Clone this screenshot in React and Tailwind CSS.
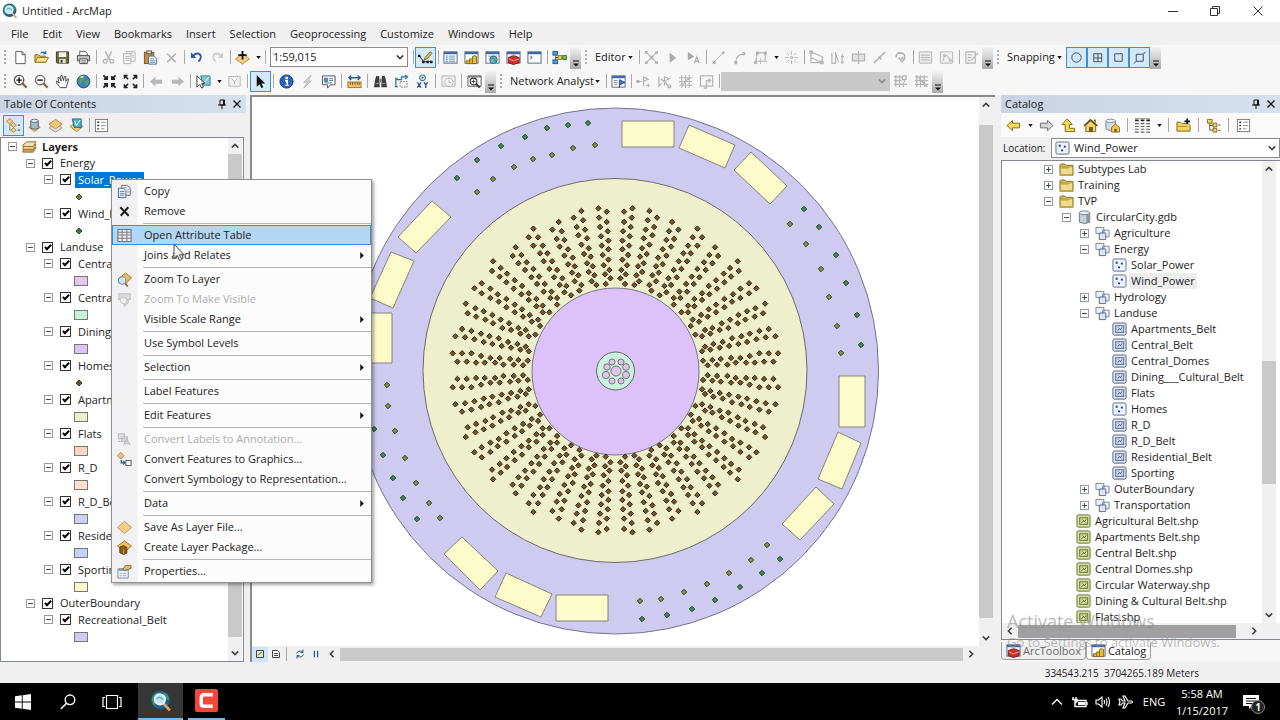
import { useState } from "react";
import clsx from "clsx";

const GREY = "#b4b4b4";

/* ---------- icons, all on a 16 x 16 grid ---------- */

const windowFrame = (
  <>
    <rect x="1" y="2" width="14" height="12" fill="#fff" stroke="#56657a" />
    <rect x="1" y="2" width="14" height="2.5" fill="#3f66a8" />
  </>
);

const polygonTile = (fill, stroke) => (
  <>
    <rect x="1" y="1" width="14" height="13" rx="1.5" fill={fill} stroke={stroke} />
    <rect x="4" y="4" width="8.5" height="7" fill="none" stroke={stroke} />
    <path d="M6 9.5 8 6.5 9 8.5 11 5.5M6 6H7M10 9.5H11" fill="none" stroke={stroke} />
  </>
);

const ICONS = {
  newDoc: <path d="M3 1.5H9.5L13 5V14.5H3ZM9.5 1.5V5H13" fill="#fff" stroke="#555" />,
  open: (
    <>
      <path d="M1 13V5H5L6.5 6.5H12V13Z" fill="#e0b94a" stroke="#8b7326" />
      <path d="M1 13 4 8H15.5L12.5 13Z" fill="#fbe08b" stroke="#8b7326" />
      <path d="M7 3.5Q10 1 12 3.5M12.5 1V4H9.5" fill="none" stroke="#2b6da8" strokeWidth="1.3" />
    </>
  ),
  save: (
    <>
      <path d="M1.5 2H14.5V14H2.5L1.5 13Z" fill="#6d6534" stroke="#3e3b22" />
      <rect x="4" y="2.5" width="8" height="5" fill="#f6f6f0" />
      <rect x="4.5" y="9.5" width="7" height="4.5" fill="#ddd" />
      <rect x="6" y="10.5" width="2" height="3" fill="#333" />
    </>
  ),
  print: (
    <>
      <path d="M4 6V1.5H10L12 3.5V6" fill="#fff" stroke="#555" />
      <path d="M1.5 6H14.5V11.5H1.5Z" fill="#c9c9c9" stroke="#444" />
      <path d="M4 9.5H12V14.5H4Z" fill="#fff" stroke="#444" />
      <path d="M5.5 11.5H10.5M5.5 13H10.5" stroke="#777" />
    </>
  ),
  cut: (
    <>
      <path d="M4.5 1.5 9.5 10.5M11.5 1.5 6.5 10.5" stroke={GREY} strokeWidth="1.5" />
      <circle cx="4.5" cy="12" r="2" fill="none" stroke={GREY} strokeWidth="1.4" />
      <circle cx="11.5" cy="12" r="2" fill="none" stroke={GREY} strokeWidth="1.4" />
    </>
  ),
  copyOff: (
    <>
      <path d="M1.5 4H9.5V14.5H1.5ZM5 4V1.5H14V12H9.5" fill="#f4f4f4" stroke={GREY} />
      <path d="M3.5 7H8M3.5 9H8M3.5 11H8M7.5 3.5H12M11 6H12.5M11 8H12.5" stroke={GREY} />
    </>
  ),
  copy: (
    <>
      <path d="M5 1.5H11L14 4V12H5Z" fill="#f4f4f4" stroke="#666" />
      <path d="M1.5 4.5H7L9.5 7V14.5H1.5Z" fill="#eef4fb" stroke="#556270" />
      <path d="M3 8H8M3 10H8M3 12H8M7 4H10M11 6.5H12.5M11 8.5H12.5" stroke="#4b86c2" />
    </>
  ),
  paste: (
    <>
      <rect x="1.5" y="2.5" width="10" height="12" fill="#c98a3a" stroke="#7c5320" />
      <rect x="4" y="1" width="5" height="3" fill="#ddd" stroke="#555" />
      <path d="M6 6.5H12L14.5 9V15H6Z" fill="#fff" stroke="#4d6892" />
      <path d="M7.5 9.5H12M7.5 11.5H13M7.5 13.2H13" stroke="#5b8ccc" />
    </>
  ),
  removeOff: <path d="M3.5 4 12.5 13M12.5 4 3.5 13" stroke={GREY} strokeWidth="1.8" />,
  remove: <path d="M3.5 3.5 12.5 12.5M12 3.5 4 12.5" stroke="#1d1d1d" strokeWidth="2.2" />,
  undo: (
    <>
      <path d="M4.5 6Q8 2.5 11.5 4.5Q14.5 7.5 10 12.5" fill="none" stroke="#2f5aa5" strokeWidth="2" />
      <path d="M2 2.5V8.5H8Z" fill="#2f5aa5" />
    </>
  ),
  redo: (
    <>
      <path d="M11.5 6Q8 2.5 4.5 4.5Q1.5 7.5 6 12.5" fill="none" stroke="#cfcfcf" strokeWidth="2" />
      <path d="M14 2.5V8.5H8Z" fill="#cfcfcf" />
    </>
  ),
  addData: (
    <>
      <path d="M8 4 15.5 9.5 8 15 .5 9.5Z" fill="#f3cc7c" stroke="#b58a45" />
      <path d="M8 1V10M3.5 5.5H12.5" stroke="#111" strokeWidth="2" />
    </>
  ),
  editTool: (
    <>
      <path d="M1.5 6 6 12.5H14" fill="none" stroke="#222" />
      <path d="M0 5H2.5V7.5H0ZM4.5 11.5H7V14H4.5ZM9 11.5H11.5V14H9ZM13 11.5H15.5V14H13Z" fill="#111" />
      <path d="M6.5 10.5 7.5 8 13 2 15 3.5 9.5 9.5Z" fill="#e9c04e" stroke="#77602a" />
    </>
  ),
  winList: (
    <>
      {windowFrame}
      <path d="M3 6.5H5M3 8.5H5M3 10.5H5M3 12.5H5" stroke="#2e73b8" />
      <path d="M6 6.5H13M6 8.5H13M6 10.5H13M6 12.5H13" stroke="#6a94b8" />
    </>
  ),
  winCatalog: (
    <>
      {windowFrame}
      <path d="M2.5 14.5V11.5H6V9.500H9V7L11 6 13.500 7V14.500Z" fill="#e6bf2d" stroke="#7b661a" />
      <path d="M6 11.500V14M9 9.500V14" stroke="#7b661a" />
    </>
  ),
  winSearch: (
    <>
      {windowFrame}
      <path d="M3 6.5H13" stroke="#999" />
      <circle cx="9" cy="10.5" r="4" fill="#69b3d3" stroke="#2a6179" />
      <path d="M7 9Q9 8 10 10T12 12" stroke="#3b9c55" strokeWidth="1.5" fill="none" />
    </>
  ),
  winToolbox: (
    <>
      {windowFrame}
      <path d="M2.5 8 8 6 14 8V13.5L8 15.5 2.5 13.5Z" fill="#c9332c" stroke="#7c1b17" />
      <path d="M3 9.5 8 11.5 14 9.5M6 6.5V5H10V6.5" fill="none" stroke="#f3a29d" />
    </>
  ),
  winPython: (
    <>
      {windowFrame}
      <path d="M3.5 6.5 5.5 8 3.5 9.5" fill="none" stroke="#333" />
    </>
  ),
  model: (
    <>
      <path d="M4 3V13M4 8H8M10 8H13" stroke="#333" />
      <rect x="1" y="1.5" width="5" height="4" fill="#4f9bd9" stroke="#275d8c" />
      <rect x="1" y="10.5" width="5" height="4" fill="#4f9bd9" stroke="#275d8c" />
      <rect x="6.5" y="6" width="4" height="4" fill="#f0d64e" stroke="#8c7a1c" />
      <rect x="11.5" y="6" width="4" height="4" fill="#7bc06a" stroke="#39732c" />
    </>
  ),
  topo: (
    <>
      <path d="M3 3 13 13M13 3 3 13" stroke={GREY} strokeWidth="1.2" />
      <path d="M1 1H4V4H1ZM12 1H15V4H12ZM1 12H4V15H1ZM12 12H15V15H12ZM6 6H10V10H6Z" fill={GREY} />
    </>
  ),
  editArrow: <path d="M5 3 12 8.5 5 13.5Z" fill="#a9a9a9" />,
  editArrowA: (
    <>
      <path d="M2 2 9 7 2 11Z" fill="#a9a9a9" />
      <path d="M9 14 11.5 7.5 14 14M10 12H13" fill="none" stroke="#a9a9a9" strokeWidth="1.3" />
    </>
  ),
  segLine: <path d="M3 13 13 3M2 12H4.5V14.5H2ZM12 2H14V4H12Z" fill={GREY} stroke={GREY} />,
  segArc: <path d="M4 14Q4 5 12 4M3 12.5H5V14.5H3ZM11.5 3H13.5V5H11.5Z" fill="none" stroke={GREY} strokeWidth="1.3" />,
  trace: (
    <>
      <path d="M3 13 4.5 3H13V12" fill="none" stroke={GREY} strokeWidth="1.2" />
      <path d="M1.5 12H4V14.5H1.5ZM3.5 2H6V4.5H3.5ZM12 2H14.5V4.5H12ZM8 9V15M5 12H15" fill={GREY} stroke={GREY} />
    </>
  ),
  burst: <path d="M8 1V5M8 11V15M1 8H5M11 8H15M3 3 5.5 5.5M13 3 10.5 5.5M3 13 5.5 10.5M13 13 10.5 10.5M7 7H9V9H7Z" stroke={GREY} fill="none" />,
  reshapeA: <path d="M2 2V13.5H14V7L2 2M2 8 14 13.5M1 1H3.5V3.5H1ZM12.5 12H15V14.5H12.5Z" fill="none" stroke={GREY} strokeWidth="1.2" />,
  reshapeB: <path d="M2 3V14H6V2M6 3 9 13M11.5 7H15M11.5 13H15M13 4V15" fill="none" stroke={GREY} strokeWidth="1.2" />,
  cutPoly: <path d="M1.5 4.5H14.5V11.5H1.5ZM8 1V15" fill="#e2e2e2" stroke={GREY} strokeWidth="1.3" />,
  split: <path d="M2 14 14 2M7 7 10 10" stroke={GREY} strokeWidth="1.6" />,
  rotate: <path d="M3.5 8Q3 3 8 3Q13 3.5 12.5 8Q12 12 8 12.5M6 8 8 10.5 11 8" fill="none" stroke={GREY} strokeWidth="1.8" />,
  attrOff: <path d="M1.5 2H14.5V14H1.5ZM3 5.5H13M3 8H13M3 10.5H13" fill="#ececec" stroke={GREY} />,
  sketchOff: <path d="M1.5 2H14.5V14H1.5ZM4 12 6 6H9L12 11M5 5H7V7H5ZM11 10H13V12H11Z" fill="#f1f1f1" stroke={GREY} />,
  createOff: <path d="M2 2H12V14H2ZM4 5H8M4 8H8M4 11H7M8 11 15 3" fill="#f1f1f1" stroke={GREY} strokeWidth="1.2" />,
  zoomIn: (
    <>
      <path d="M10 10 14.5 14.5" stroke="#8c6a3f" strokeWidth="2.4" />
      <circle cx="6.5" cy="6.5" r="5" fill="#fff" stroke="#4c4c4c" strokeWidth="1.3" />
      <path d="M6.5 3.5V9.5M3.5 6.5H9.5" stroke="#111" strokeWidth="1.5" />
    </>
  ),
  zoomOut: (
    <>
      <path d="M10 10 14.5 14.5" stroke="#8c6a3f" strokeWidth="2.4" />
      <circle cx="6.5" cy="6.5" r="5" fill="#fff" stroke="#666" strokeWidth="1.3" />
      <path d="M3.5 6.5H9.5" stroke="#111" strokeWidth="1.5" />
    </>
  ),
  pan: (
    <path
      d="M5.5 14.5 2 10 1.5 7.5 4.5 9.5 3 4 4.5 3.5 6.5 7.5 6 2 7.5 1.5 9 7 10 2.5 11.5 2.5 11.5 8 13.5 5 14.5 5.5 12 14.5Z"
      fill="#fff"
      stroke="#444"
    />
  ),
  globe: (
    <>
      <circle cx="8" cy="8" r="6.8" fill="#3e7fd0" stroke="#24487e" />
      <path d="M3 4Q6 1.5 8 3.5Q10 6 7 7.5Q5 8 5 11Q2 9 3 4Z" fill="#58a63f" />
      <path d="M10 7Q13 6 14 8Q13 12 10 13Q9 10 10 7Z" fill="#58a63f" />
      <path d="M5 3.5Q6.5 2.5 8 3" stroke="#fff" fill="none" strokeWidth="1.5" />
    </>
  ),
  shrink: (
    <path
      d="M1.5 1.500 5 5M14.500 1.500 11 5M1.500 14.500 5 11M14.500 14.500 11 11M2 5.500H5.500V2M14 5.500H10.500V2M2 10.500H5.500V14M14 10.500H10.500V14"
      fill="none"
      stroke="#222"
      strokeWidth="1.8"
    />
  ),
  grow: (
    <path
      d="M2 2 5.500 5.500M14 2 10.500 5.500M2 14 5.500 10.500M14 14 10.500 10.500M1.5 5V1.5H5M14.5 5V1.5H11M1.5 11V14.5H5M14.5 11V14.5H11"
      fill="none"
      stroke="#222"
      strokeWidth="1.6"
    />
  ),
  backOff: <path d="M1 8 7 3V6H14V10.5H7V13Z" fill="#b9b9b9" />,
  fwdOff: <path d="M15 8 9 3V6H2V10.5H9V13Z" fill="#b9b9b9" />,
  selectFeat: (
    <>
      <path d="M5 2H15V12H8Z" fill="#7fc9d6" stroke="#39808c" />
      <path d="M8 10 14 3" stroke="#fff" />
      <path d="M1 2V14L4 11 6 15 8 14 6 10H9.5Z" fill="#fff" stroke="#333" />
    </>
  ),
  clearSel: <path d="M2 2.5H14V13H2ZM5 5 8 8 11 5M8 8V11" fill="#f2f2f2" stroke={GREY} />,
  pointer: <path d="M4 1V13.5L7 10.8 9 15 11 14 9 10H13Z" fill="#111" />,
  info: (
    <>
      <circle cx="8" cy="8" r="7" fill="#2a62b4" stroke="#17407e" />
      <path d="M6.5 7H9V12M6.5 12H10.5M7.5 3.5H9V5H7.5Z" stroke="#fff" strokeWidth="1.3" fill="#fff" />
    </>
  ),
  bolt: <path d="M12 1 4 9H8L4 15 12 7.5H8.5Z" fill="#d2d2d2" stroke="#b9b9b9" />,
  popup: (
    <>
      <path d="M1.5 2H15V11.5H10L7 15V11.5H1.5Z" fill="#f7f9fb" stroke="#555" />
      <path d="M3.5 4.5H7V8H3.5ZM8.5 5H13M8.5 7H13M3.5 9.5H12" fill="#5d8db5" stroke="#5d7d99" />
    </>
  ),
  measure: (
    <>
      <path d="M2 4H14M4.5 1.5 2 4 4.5 6.5M11.5 1.5 14 4 11.5 6.5" fill="none" stroke="#2c5b99" strokeWidth="1.5" />
      <rect x="1" y="8.5" width="14" height="6" fill="#f1c36a" stroke="#a2742a" />
      <path d="M3.5 9V11.5M6 9V11.5M8.5 9V11.5M11 9V11.5M13 9V11.5" stroke="#6b4a16" />
    </>
  ),
  find: (
    <>
      <path d="M3.5 2H6.5L7.2 14H1L2.5 5ZM9.5 2H12.5L13.5 5 15 14H8.8Z" fill="#3e3e3e" />
      <path d="M7 5H9V9H7Z" fill="#777" />
      <path d="M3 10H6M10 10H13" stroke="#aaa" />
    </>
  ),
  route: (
    <>
      <path d="M2 13V6H8V3H14" fill="none" stroke="#2f6da8" strokeWidth="1.3" />
      <path d="M11.5 1 14.5 3 11.5 5.5M1 4.5H4M1 13.5H4" fill="none" stroke="#2f6da8" strokeWidth="1.2" />
      <path d="M6.5 8H14V14H6.5Z" fill="#f3f3f3" stroke="#888" strokeDasharray="2 1" />
    </>
  ),
  goToXY: (
    <>
      <circle cx="8" cy="4" r="3" fill="none" stroke="#3a76a8" strokeWidth="1.2" />
      <path d="M7 4H9M2.5 9 6.5 14.5M6.5 9 2.5 14.5M9.5 9 11.5 11.5 13.5 9M11.5 11.5V15" fill="none" stroke="#2c4f7e" strokeWidth="1.4" />
    </>
  ),
  clockOff: (
    <>
      <path d="M1 2H15V13H1Z" fill="#eee" stroke={GREY} />
      <circle cx="8.5" cy="9" r="4.5" fill="#f5f5f5" stroke={GREY} />
      <path d="M8.5 6V9H11" fill="none" stroke={GREY} />
    </>
  ),
  viewer: (
    <>
      <path d="M1 2H15V13H1Z" fill="#fff" stroke="#555" />
      <path d="M1 3H15" stroke="#777" strokeWidth="1.5" />
      <path d="M9.5 10 13.5 14.5" stroke="#333" strokeWidth="2" />
      <circle cx="7" cy="8" r="3.6" fill="#fff" stroke="#333" strokeWidth="1.2" />
      <path d="M5 8H9M7 6V10" stroke="#333" />
    </>
  ),
  winNetwork: (
    <>
      {windowFrame}
      <path d="M3 7H7M3 9H7M3 11H7" stroke="#888" />
      <path d="M9 15V6L15 9 9.5 11.5" fill="#3d72cf" stroke="#2b51a0" />
    </>
  ),
  netA: <path d="M1 8H6M8 13V3L13 5.5 8 8M11 12H15M13 10V14M1 7H3V9H1Z" fill="none" stroke={GREY} strokeWidth="1.3" />,
  netB: <path d="M2 3V13L5 10M8 12V3L13 5 8 7.5M4 5 13 13M12 12H14.5V14.5H12Z" fill="none" stroke={GREY} strokeWidth="1.3" />,
  netGrid: <path d="M1 4H15M1 8H15M1 12H15M4 1V15M8 1V15M12 1V15M4 12 8 8 12 4" fill="none" stroke={GREY} strokeWidth="1.2" />,
  netDir: <path d="M1.5 2H14.5V13H1.5ZM5 15H8V7H12M10 5 12.5 7 10 9" fill="none" stroke={GREY} strokeWidth="1.3" />,
  netGridB: <path d="M1 3H9M1 7H9M1 11H15M3 1V14M7 1V14M11 9V14M10 2H14V6H10ZM12 6V9" fill="none" stroke={GREY} strokeWidth="1.3" />,
  netGridC: <path d="M1 3H15M1 7H15M1 11H15M3 1V14M7 1V14M11 1V14M5 4 14 14" fill="none" stroke={GREY} strokeWidth="1.3" />,
  snapPoint: <circle cx="8" cy="8" r="5" fill="none" stroke="#34495e" />,
  snapEnd: <path d="M4 4H12.5V12.5H4ZM8.5 4V12.5M4 8.5H12.5" fill="none" stroke="#34495e" />,
  snapVertex: <path d="M4 4H12V12H4Z" fill="none" stroke="#34495e" />,
  snapEdge: <path d="M4.5 4.5H12V12H4.5ZM2 14.5 4.5 12M12 4.5 14.5 2" fill="none" stroke="#34495e" />,
  drawOrder: (
    <>
      <path d="M4 5V13H9M5 8H9" fill="none" stroke="#8a8a8a" />
      <path d="M4 .5 7.5 3.5 4 6.5 .5 3.5ZM8 5 11 7.5 8 10 5 7.5ZM8 10.5 11 13 8 15.5 5 13Z" fill="#f5cd82" stroke="#b8893c" />
      <path d="M12.5 7.5H15M12.5 13H15" stroke="#555" strokeWidth="1.3" />
    </>
  ),
  source: (
    <>
      <path d="M2 10 8 14.5 14 10 12 8H4Z" fill="#f1c46f" stroke="#b58a45" />
      <path d="M4 3V11Q8 13 12 11V3" fill="#a9b9cb" stroke="#5b6b7d" />
      <ellipse cx="8" cy="3" rx="4" ry="1.7" fill="#e5edf5" stroke="#5b6b7d" />
    </>
  ),
  visibility: (
    <>
      <path d="M8 6 15 10.5 8 15 1 10.5Z" fill="#dedede" stroke="#999" />
      <path d="M8 1.5 15 6.5 8 11.5 1 6.5Z" fill="#f3c876" stroke="#b58a45" />
    </>
  ),
  selectionList: (
    <>
      <path d="M1 9 8 14.5 15 9 12 7H4Z" fill="#f1c46f" stroke="#b58a45" />
      <path d="M3.5 1H13V10H5.5Z" fill="#49b3cc" stroke="#2c6475" />
      <path d="M6 3 8 8 12 2" fill="none" stroke="#fff" />
    </>
  ),
  options: (
    <>
      <rect x="1.5" y="1.5" width="13" height="13" fill="#fff" stroke="#777" />
      <path d="M3.5 4.5H5.5M3.5 8H5.5M3.5 11.5H5.5" stroke="#333" strokeWidth="1.4" />
      <path d="M7.5 4.5H13M7.5 8H13M7.5 11.5H11" stroke="#999" strokeWidth="1.2" />
    </>
  ),
  layers: (
    <>
      <path d="M1 12 5 9H15L12 14H1Z" fill="#d9a441" stroke="#8d6a2d" />
      <path d="M1 9 5 6H15L12 11H1Z" fill="#f0d79c" stroke="#8d6a2d" />
      <path d="M1 6.5 5 3H15L12 8H1Z" fill="#f5dfa9" stroke="#8d6a2d" />
    </>
  ),
  table: (
    <>
      <rect x="1" y="1.5" width="14" height="13" fill="#eee" stroke="#666" />
      <path d="M1 4.5H15M1 7.5H15M1 11H15M5.5 1.5V14.5M10.5 1.5V14.5" stroke="#777" />
    </>
  ),
  zoomLayer: (
    <>
      <path d="M9 1 15.500 6 9 13 2 7Z" fill="#efb860" stroke="#b07a2c" />
      <path d="M8.500 12 11.500 15.500" stroke="#8c6a3f" strokeWidth="2" />
      <circle cx="5.5" cy="9" r="4" fill="#cfe6f7" stroke="#6d8fab" strokeWidth="1.2" />
    </>
  ),
  zoomVisible: (
    <>
      <path d="M2 2H14V8H2ZM5 8 8 15 12 11V8" fill="#dcdcdc" stroke="#c2c2c2" strokeWidth="1.3" />
      <circle cx="7" cy="9" r="3.5" fill="#eee" stroke="#c2c2c2" />
    </>
  ),
  annoOff: <path d="M1.5 2H8V7H1.5ZM5 5H11V10H5ZM7 14 10 7 14 14M8 12H13M1 10H4" fill="#e2e2e2" stroke="#c0c0c0" strokeWidth="1.2" />,
  toGraphics: (
    <>
      <path d="M4 .5 7.5 4 4 7.5 .5 4Z" fill="#f2c47c" stroke="#b98440" />
      <path d="M4.5 8.5V11.5H8M6.5 9.5 8.5 11.5 6.5 13.5" fill="none" stroke="#1f6396" strokeWidth="1.3" />
      <rect x="9.5" y="9" width="5.5" height="5.5" fill="#fff" stroke="#555" />
    </>
  ),
  layerFile: <path d="M8 1.500 15.5 8 8 14.500 .5 8Z" fill="#f3cf86" stroke="#c39345" />,
  layerPackage: (
    <>
      <path d="M8 1 15.5 6.5 8 13 .5 6.5Z" fill="#f0c05c" stroke="#a87620" />
      <path d="M3 7.5 7 6 10.5 8V14L7 15.5 3 13.5Z" fill="#8a5a1e" stroke="#5f3c10" />
      <path d="M7 9.5V15" stroke="#caa05c" />
    </>
  ),
  properties: (
    <>
      <path d="M1 5H12V15H1Z" fill="#eef6fb" stroke="#7c8a94" />
      <path d="M1.5 6.5H11.5" stroke="#6ea3c7" strokeWidth="2" />
      <path d="M3 10H5M6 10H10M3 12.5H5M6 12.5H10" stroke="#9aabb5" />
      <path d="M6 6 9 1.5H15V4.5L11 6 8 7Z" fill="#d9b878" stroke="#8b6b33" />
    </>
  ),
  catBack: <path d="M1 8 7 2.5V5.5H14.5V10.5H7V13.5Z" fill="#f4d95a" stroke="#7d6a18" />,
  catFwd: <path d="M15 8 9 2.5V5.5H1.5V10.5H9V13.5Z" fill="#d8d8d8" stroke="#6a6a6a" />,
  catUp: <path d="M6.5 1 12 7H9V11H14.5V14.5H4.5V7H1Z" fill="#f4d95a" stroke="#7d6a18" />,
  home: (
    <>
      <path d="M3 8V14.5H13.5V8L8 3Z" fill="#f2d470" stroke="#7d6a18" />
      <path d="M1 8.5 8 2 15.5 8.5" fill="none" stroke="#5d4d12" strokeWidth="1.6" />
      <path d="M7 10H10V14.5H7ZM11.5 2H13V5" fill="#6b5a1c" stroke="#6b5a1c" />
    </>
  ),
  defaultGdb: (
    <>
      <path d="M1 3V12Q6 15 11 12V3" fill="#d3dbe4" stroke="#7d8894" />
      <ellipse cx="6" cy="3" rx="5" ry="1.8" fill="#f3f6f9" stroke="#7d8894" />
      <path d="M7 10 11 6.5 15.5 10V15H7Z" fill="#f2c94f" stroke="#8a6d19" />
      <path d="M10 11.5H12.5V15H10Z" fill="#6b5a1c" />
    </>
  ),
  contents: (
    <>
      <path d="M0 2.500H4M6 2.500H10M12 2.500H16" stroke="#222" strokeWidth="1.800" />
      <path d="M0 .500H16" stroke="#999" />
      <path d="M0 6H4M6 6H10M12 6H16M0 9H4M6 9H10M12 9H16M0 12H4M6 12H10M12 12H16M0 15H4M6 15H10M12 15H16" stroke="#666" strokeWidth="1.200" />
    </>
  ),
  connect: (
    <>
      <path d="M1 14V4.5H5L6.5 6H13L15 8V14Z" fill="#f1d567" stroke="#7d6a18" />
      <path d="M1.5 9H12" stroke="#a98f2c" />
      <path d="M12 .5V6.5M9 3.5H15" stroke="#111" strokeWidth="1.8" />
    </>
  ),
  tree: (
    <>
      <path d="M4 5V13H8M4 8H8" fill="none" stroke="#555" />
      <path d="M1.5 1.5H6.5V5.5H1.5ZM7.5 5.5H11.5V9.5H7.5ZM7.5 11H11.5V15H7.5Z" fill="#f1d567" stroke="#7d6a18" />
      <path d="M13 7.5H15.5M13 13H15.5" stroke="#555" strokeWidth="1.2" />
    </>
  ),
  folder: (
    <>
      <path d="M1 14V3L2 2H6L7.5 3.5H15V14Z" fill="#cfae4c" stroke="#8b7630" />
      <path d="M1.5 13.500V6.5H10L11.5 5H14.5V13.5Z" fill="#f0db8a" stroke="#a48d3d" strokeWidth=".7" />
    </>
  ),
  gdb: (
    <>
      <path d="M2.5 3V13Q8 16 13.5 13V3" fill="#c8ced6" stroke="#6d7783" />
      <path d="M10 4V14L13.5 13V3Z" fill="#8c97a5" />
      <ellipse cx="8" cy="3" rx="5.5" ry="2" fill="#eef1f5" stroke="#6d7783" />
    </>
  ),
  dataset: (
    <>
      <path d="M1 1.5H9.5V8H1ZM8 4.5H15V11.5H8Z" fill="#edf1f8" stroke="#7482a0" />
      <path d="M4.5 7.5H11.5V14.5H4.5Z" fill="#dde3f0" stroke="#5c6a8a" />
    </>
  ),
  points: (
    <>
      <rect x="1" y="1" width="14" height="13" rx="1.5" fill="#eaf0fb" stroke="#5d6b8e" />
      <path d="M4 4H6V6H4ZM9.5 5H11.5V7H9.5ZM6.5 9H8.5V11H6.5Z" fill="#27365c" />
    </>
  ),
  polygons: polygonTile("#dbe4f2", "#51607f"),
  shapefile: polygonTile("#dbe4a4", "#5d6a2d"),
};

function Icon({ name, className = "size-4" }) {
  return (
    <svg viewBox="0 0 16 16" className={clsx("shrink-0", className)} aria-hidden="true">
      {ICONS[name]}
    </svg>
  );
}

function Chevron({ dir = "down", className = "size-2" }) {
  const d = {
    down: "M1 3 5 7 9 3",
    up: "M1 7 5 3 9 7",
    left: "M7 1 3 5 7 9",
    right: "M3 1 7 5 3 9",
  }[dir];
  return (
    <svg viewBox="0 0 10 10" className={clsx("shrink-0", className)} aria-hidden="true">
      <path d={d} fill="none" stroke="#404040" strokeWidth="2" />
    </svg>
  );
}

/* magnifier over a globe, used by the title bar and the taskbar */
function ArcLogo({ className }) {
  return (
    <svg viewBox="0 0 20 20" className={className} aria-hidden="true">
      <circle cx="9.5" cy="9" r="8.5" fill="#1d5f86" />
      <path d="M2 7Q5 1 10 3Q8 6 5 8Q4 12 5 15Q1 11 2 7ZM12 2Q17 4 17.5 9Q14 9 13 6Z" fill="#3c9a68" />
      <path d="M12 12 18 18.5" stroke="#d9a96a" strokeWidth="2.4" />
      <circle cx="9" cy="8.5" r="4.8" fill="#bfe3ef" stroke="#eaf6fa" strokeWidth="1.5" />
      <path d="M6 8Q9 5 12 9" stroke="#6fb6cf" strokeWidth="1.5" fill="none" />
    </svg>
  );
}

/* ---------- toolbars ---------- */

const Grip = () => (
  <span className="flex w-2.5 shrink-0 justify-center">
    <span className="h-3.5 border-l-2 border-dotted border-[#b0b0b0]" />
  </span>
);

const Sep = ({ className = "w-1" }) => (
  <span className={clsx("flex shrink-0 justify-center", className)}>
    <span className="h-3.5 w-px bg-[#a8a8a8]" />
  </span>
);

const Drop = () => (
  <button aria-label="More choices" className="flex h-5 w-2.5 shrink-0 items-center justify-center">
    <svg viewBox="0 0 6 4" className="h-[3px] w-[5px]">
      <path d="M0 0H6L3 4Z" fill="#111" />
    </svg>
  </button>
);

const Overflow = () => (
  <button
    aria-label="Toolbar options"
    className="flex h-[22px] w-[11px] shrink-0 items-end justify-center self-end bg-linear-to-b from-[#f4f4f4] to-[#a9a9a9] pb-0.5"
  >
    <svg viewBox="0 0 6 7" className="h-[7px] w-1.5">
      <path d="M0 1H6" stroke="#111" />
      <path d="M0 3.5H6L3 6.5Z" fill="#111" />
    </svg>
  </button>
);

function Tool({ name, on }) {
  return (
    <button
      aria-label={name}
      aria-pressed={on}
      className={clsx(
        "flex h-[21px] w-[21px] shrink-0 items-center justify-center",
        on && "border border-[#3d8fd1] bg-[#d5e8f8]",
      )}
    >
      <Icon name={name} className="size-[15px]" />
    </button>
  );
}

/* "|" separator, "v" drop-down arrow, "*" before a name marks a pressed tool */
function Tools({ list, sep }) {
  return list.split(" ").map((t, i) => {
    if (t === "|") return <Sep key={i} className={sep} />;
    if (t === "v") return <Drop key={i} />;
    return <Tool key={i} name={t.replace("*", "")} on={t.startsWith("*")} />;
  });
}

function MenuText({ children, className }) {
  return (
    <button className={clsx("flex shrink-0 items-center justify-between pl-1 whitespace-nowrap", className)}>
      {children}
      <svg viewBox="0 0 6 4" className="mr-1 h-[3px] w-[5px]">
        <path d="M0 0H6L3 4Z" fill="#111" />
      </svg>
    </button>
  );
}

function StandardToolbar() {
  return (
    <div className="flex h-6 items-center">
      <Grip />
      <Tools list="newDoc open save print | cut copyOff paste removeOff | undo redo | addData v |" />
      <label className="relative mx-[3px] flex w-[138px] shrink-0 items-center">
        <select aria-label="Map scale" className="h-5 w-full appearance-none border border-[#8a8a8a] bg-white pl-0.5 text-[11px]">
          <option>1:59,015</option>
        </select>
        <Chevron className="pointer-events-none absolute right-1 size-2" />
      </label>
      <Tools list="| *editTool | winList winCatalog winSearch winToolbox winPython | model" />
      <Overflow />
      <Grip />
      <MenuText className="w-[46px]">Editor</MenuText>
      <Tools list="| topo editArrow editArrowA | segLine segArc trace v burst | reshapeA reshapeB cutPoly split rotate | attrOff sketchOff | createOff" />
      <Overflow />
      <Grip />
      <MenuText className="w-[63px]">Snapping</MenuText>
      <Tools list="*snapPoint *snapEnd *snapVertex *snapEdge" />
      <Overflow />
    </div>
  );
}

function ToolsToolbar() {
  return (
    <div className="flex h-6 items-center">
      <Grip />
      <Tools
        sep="w-[5px]"
        list="zoomIn zoomOut pan globe | shrink grow | backOff fwdOff | selectFeat v clearSel | *pointer | info bolt popup | measure | find route goToXY | clockOff | viewer"
      />
      <Overflow />
      <Grip />
      <MenuText className="w-[98px]">Network Analyst</MenuText>
      <Tools list="| winNetwork | netA netB netGrid netDir |" />
      <label className="relative flex w-[169px] shrink-0 items-center">
        <select aria-label="Network dataset" disabled className="h-[19px] w-full appearance-none bg-[#c8c8c8]" />
        <Chevron className="pointer-events-none absolute right-1 size-2 opacity-40" />
      </label>
      <Tools list="netGridB netGridC" />
      <Overflow />
    </div>
  );
}

/* ---------- shared panel parts ---------- */

function PanelHeader({ title }) {
  return (
    <div className="flex h-[18px] shrink-0 items-center bg-linear-to-r from-[#c9d3e3] to-[#d5e1ee] pr-0.5 pl-1">
      <h2 className="flex-1 truncate">{title}</h2>
      <button aria-label={`Pin ${title}`} className="flex w-4 justify-center">
        <svg viewBox="0 0 10 10" className="size-2.5">
          <path d="M3 1H7.5V6H3ZM1 6H9M5 6V10M6.5 1V6" fill="none" stroke="#111" />
        </svg>
      </button>
      <button aria-label={`Close ${title}`} className="flex w-3.5 justify-center">
        <svg viewBox="0 0 10 10" className="size-2.5">
          <path d="M1.5 1.5 8.5 8.5M8.5 1.5 1.5 8.5" stroke="#111" strokeWidth="1.3" />
        </svg>
      </button>
    </div>
  );
}

function Toggle({ open }) {
  return (
    <button aria-label={open ? "Collapse" : "Expand"} aria-expanded={open} className="size-[9px] shrink-0">
      <svg viewBox="0 0 9 9" className="size-[9px]">
        <rect x=".5" y=".5" width="8" height="8" fill="#fff" stroke="#999" />
        <path d={open ? "M2 4.5H7" : "M2 4.5H7M4.5 2V7"} stroke="#3b4a6b" />
      </svg>
    </button>
  );
}

function VScroll({ thumb, className }) {
  return (
    <div className={clsx("flex w-3.5 shrink-0 flex-col items-center bg-[#f0f0f0]", className)}>
      <button aria-label="Scroll up" className="flex h-4 items-center">
        <Chevron dir="up" />
      </button>
      <div className="flex w-full flex-1 flex-col">{thumb}</div>
      <button aria-label="Scroll down" className="flex h-4 items-center">
        <Chevron />
      </button>
    </div>
  );
}

/* ---------- table of contents ---------- */

const TOC = [
  { name: "Energy", layers: [["Solar_Power", "dot", "#6f7f34"], ["Wind_Power", "dot", "#2f7f35"]] },
  {
    name: "Landuse",
    layers: [
      ["Central_Belt", "box", "#e3c6ee"],
      ["Central_Domes", "box", "#c5f2dc"],
      ["Dining___Cultural_Belt", "box", "#dcc3f8"],
      ["Homes", "dot", "#6b4f22"],
      ["Apartments_Belt", "box", "#ecefcb"],
      ["Flats", "box", "#fdd5c2"],
      ["R_D", "box", "#fddfcd"],
      ["R_D_Belt", "box", "#cdcff3"],
      ["Residential_Belt", "box", "#c4d3f3"],
      ["Sporting", "box", "#fcfcca"],
    ],
  },
  { name: "OuterBoundary", layers: [["Recreational_Belt", "box", "#cfcaee"]] },
];

const checkClass =
  "relative size-[11px] shrink-0 appearance-none border border-[#333] bg-white checked:after:absolute checked:after:top-0 checked:after:left-[3px] checked:after:h-[7px] checked:after:w-1 checked:after:rotate-45 checked:after:border-r-2 checked:after:border-b-2 checked:after:border-black checked:after:content-['']";

function Check({ label, selected }) {
  return (
    <label className="flex items-center gap-1 whitespace-nowrap">
      <input type="checkbox" defaultChecked className={checkClass} />
      <span className={clsx("px-[3px] leading-4", selected && "bg-[#0078d7] text-white")}>{label}</span>
    </label>
  );
}

function TocLayer({ layer: [name, kind, fill] }) {
  return (
    <li>
      <div className="flex h-[17px] items-center gap-[7px] pl-[43px]">
        <Toggle open />
        <Check label={name} selected={name === "Solar_Power"} />
      </div>
      <div className="flex h-[17px] items-center pl-[73px]">
        <svg viewBox="0 0 14 10" className="h-2.5 w-3.5">
          {kind === "box" ? (
            <rect x=".5" y=".5" width="13" height="9" fill={fill} stroke="#777" />
          ) : (
            <path d="M5 2 8 5 5 8 2 5Z" fill={fill} stroke="#222" strokeWidth=".8" />
          )}
        </svg>
      </div>
    </li>
  );
}

function TableOfContents() {
  return (
    <aside className="flex w-[246px] shrink-0 flex-col">
      <PanelHeader title="Table Of Contents" />
      <div className="flex h-6 shrink-0 items-center pl-[3px]">
        <Tools list="*drawOrder source visibility selectionList | options" />
      </div>
      <div className="mr-0.5 flex min-h-0 flex-1 border border-[#828790] bg-white">
        <ul className="min-w-0 flex-1 overflow-hidden">
          <li>
            <div className="flex h-[17px] items-center gap-[5px] pl-[7px] font-bold">
              <Toggle open />
              <Icon name="layers" className="size-[15px]" />
              Layers
            </div>
            <ul>
              {TOC.map((g) => (
                <li key={g.name}>
                  <div className="flex h-4 items-center gap-[7px] pl-[25px]">
                    <Toggle open />
                    <Check label={g.name} />
                  </div>
                  <ul>
                    {g.layers.map((l) => (
                      <TocLayer key={l[0]} layer={l} />
                    ))}
                  </ul>
                </li>
              ))}
            </ul>
          </li>
        </ul>
        <VScroll className="mr-px" thumb={<span className="mb-2 flex-1 self-stretch bg-[#c9c9c9]" />} />
      </div>
    </aside>
  );
}

/* ---------- map ---------- */

/* homes in one quarter of the ring, [dx, dy] outward from the centre in thirds of a unit */
const HOMES = [
  [51, 486], [26, 476], [49, 458], [26, 445], [46, 430], [23, 417], [43, 402], [21, 389], [41, 374], [21, 363], [38, 346], [21, 332], [35, 315], [18, 301], [31, 288], [15, 276], [29, 259],
  [102, 478], [125, 458], [97, 450], [116, 430], [91, 422], [111, 405], [85, 396], [102, 377], [80, 366], [94, 349], [74, 341], [85, 321], [68, 312], [80, 295], [63, 285], [71, 267], [57, 256],
  [170, 445], [189, 422], [161, 417], [176, 394], [153, 391], [167, 371], [142, 363], [153, 344], [128, 338], [142, 318], [122, 312], [130, 293], [111, 285], [122, 267], [102, 256], [108, 239],
  [246, 425], [260, 399], [232, 399], [246, 374], [218, 374], [226, 351], [204, 351], [215, 327], [190, 327], [198, 304], [175, 301], [184, 279], [159, 276], [167, 256], [147, 253], [153, 234], [133, 225],
  [299, 369], [308, 343], [282, 346], [291, 321], [266, 324], [271, 301], [246, 304], [252, 279], [229, 281], [235, 259], [212, 259], [215, 236], [192, 236], [195, 217], [175, 217], [175, 197],
  [367, 327], [370, 298], [344, 307], [347, 281], [325, 290], [327, 264], [302, 270], [305, 245], [280, 253], [282, 228], [260, 231], [260, 211], [237, 214], [237, 192], [218, 194], [218, 174], [198, 174],
  [401, 261], [423, 246], [401, 231], [375, 245], [353, 228], [375, 217], [350, 206], [327, 214], [302, 197], [327, 189], [302, 174], [280, 183], [257, 166], [277, 161], [232, 152], [251, 146], [226, 133],
  [449, 200], [443, 171], [420, 186], [418, 161], [395, 177], [390, 152], [369, 166], [367, 141], [344, 152], [339, 127], [319, 141], [313, 121], [291, 127], [285, 110], [269, 121], [260, 102], [240, 107],
  [460, 124], [480, 102], [432, 118], [451, 99], [403, 110], [423, 93], [378, 102], [395, 85], [350, 96], [369, 79], [322, 85], [341, 73], [294, 79], [313, 68], [269, 71], [285, 62], [260, 57],
  [488, 51], [474, 26], [460, 51], [446, 26], [432, 51], [418, 23], [403, 43], [392, 23], [375, 37], [361, 23], [347, 37], [336, 17], [316, 34], [305, 17], [291, 31], [277, 15], [263, 29],
];

const WIND = [
  [588, 123], [568, 125], [547, 128], [525, 137], [501, 146], [477, 160], [457, 178],
  [804, 209], [819, 227], [836, 255], [846, 283], [857, 315], [861, 345],
  [780, 559], [762, 573], [740, 587], [715, 600], [692, 609], [667, 615], [642, 619],
  [374, 429], [383, 455], [393, 478], [403, 498], [417, 519],
];

const SOLAR = [
  [595, 145], [573, 148], [552, 155], [533, 159], [514, 167], [493, 179], [477, 192],
  [790, 224], [806, 244], [821, 269], [829, 297], [837, 326], [841, 353],
  [767, 545], [751, 560], [729, 573], [707, 584], [684, 592], [661, 599], [640, 601],
  [387, 385], [388, 406], [395, 431], [405, 458], [416, 483], [429, 503], [440, 518],
];

const APARTMENTS = [
  "622,121 674,121 674,147 622,147",
  "689,125 735,145 725,168 679,148",
  "751,152 787,186 770,204 734,170",
  "839,376 865,376 865,427 839,427",
  "838,432 861,443 842,489 818,479",
  "816,487 834,504 800,540 782,524",
  "462,537 498,571 480,590 444,554",
  "506,573 552,594 541,617 495,597",
  "556,595 608,595 608,621 556,621",
  "432,201 451,217 416,253 398,237",
  "391,252 414,261 393,308 370,298",
  "363,313 392,313 392,363 363,363",
];

const DOMES = [[612, 362, 3], [621, 362, 3], [626, 367, 3.4], [626, 375, 3.6], [621, 381, 3], [612, 381, 3], [606, 375, 3.6], [607, 367, 3.2]];

const marker = ([x, y], r) => `M${x} ${y - r}L${x + r} ${y}L${x} ${y + r}L${x - r} ${y}Z`;

const homesPath = HOMES.flatMap(([dx, dy]) =>
  [[1, 1], [1, -1], [-1, 1], [-1, -1]].map(([sx, sy]) => marker([615.4 + (sx * dx) / 3, 370.3 + (sy * dy) / 3], 2.7)),
).join("");

function CityMap() {
  return (
    <svg viewBox="252 97 727 549" className="size-full" role="img" aria-label="Circular city map">
      <g stroke="#74748a">
        <circle cx="615.5" cy="371" r="263" fill="#cfcbf0" />
        <circle cx="615" cy="370.5" r="192" fill="#eeefcd" stroke="#6a6a6a" />
        <circle cx="615.5" cy="371.5" r="83.5" fill="#dcc2f9" />
        <circle cx="615.5" cy="371" r="19" fill="#c9f3dc" stroke="#666" />
      </g>
      <g fill="#fcfbca" stroke="#84847c">
        {APARTMENTS.map((p) => (
          <polygon key={p} points={p} />
        ))}
      </g>
      <g fill="#e2c2ef" stroke="#777">
        <circle cx="616" cy="371" r="5" />
        {DOMES.map(([x, y, r]) => (
          <circle key={`${x}-${y}`} cx={x} cy={y} r={r} />
        ))}
      </g>
      <path d={homesPath} fill="#73552b" stroke="#33240f" />
      <path d={SOLAR.map((p) => marker(p, 2.7)).join("")} fill="#8a9440" stroke="#2d3018" />
      <path d={WIND.map((p) => marker(p, 2.7)).join("")} fill="#3c9148" stroke="#173a1f" />
    </svg>
  );
}

function MapView() {
  return (
    <main className="ml-1 flex min-w-0 flex-1 flex-col border-t-2 border-l-2 border-[#8a8a8a] bg-[#f0f0f0]">
      <div className="flex min-h-0 flex-1">
        <div className="min-w-0 flex-1 bg-white">
          <CityMap />
        </div>
        <VScroll className="mr-0.5" thumb={<span className="mt-3 mb-3 flex-1 bg-[#c9c9c9]" />} />
      </div>
      <div className="flex h-4 shrink-0 items-center">
        <button aria-label="Data view" className="flex h-[15px] w-4 items-center justify-center bg-[#cfe4f7]">
          <svg viewBox="0 0 10 10" className="size-2.5">
            <path d="M1.5 1.5H8.5V8.5H1.5ZM3 6.500 6.500 3" fill="#e4edca" stroke="#444" />
          </svg>
        </button>
        <button aria-label="Layout view" className="flex w-4 justify-center">
          <svg viewBox="0 0 10 10" className="size-2.5">
            <path d="M1.5 1.5H6.5L8.5 3.5V8.5H1.5ZM3 4.500H7M3 6.500H7" fill="#fff" stroke="#444" />
          </svg>
        </button>
        <Sep />
        <button aria-label="Refresh" className="ml-1 flex w-4 justify-center">
          <svg viewBox="0 0 10 10" className="size-2.5">
            <path d="M1.5 4.5Q3 1 7.5 2.5M8.5 5.5Q7 9 2.5 7.5M8 .5V3.5H5.5M2 9.5V6.5H4.5" fill="none" stroke="#2c5b86" />
          </svg>
        </button>
        <button aria-label="Pause drawing" className="flex w-4 justify-center">
          <svg viewBox="0 0 10 10" className="size-2">
            <path d="M3 1V9M7 1V9" stroke="#2c50a0" strokeWidth="1.6" />
          </svg>
        </button>
        <button aria-label="Scroll left" className="flex w-4 justify-center">
          <Chevron dir="left" />
        </button>
        <span className="h-[13px] flex-1 bg-[#c9c9c9]" />
        <button aria-label="Scroll right" className="mr-4 flex w-4 justify-center">
          <Chevron dir="right" />
        </button>
      </div>
    </main>
  );
}

/* ---------- catalog ---------- */

/* [level, toggle, icon, name] */
const CATALOG = [
  [0, "+", "folder", "Subtypes Lab"],
  [0, "+", "folder", "Training"],
  [0, "-", "folder", "TVP"],
  [1, "-", "gdb", "CircularCity.gdb"],
  [2, "+", "dataset", "Agriculture"],
  [2, "-", "dataset", "Energy"],
  [3, "", "points", "Solar_Power"],
  [3, "", "points", "Wind_Power"],
  [2, "+", "dataset", "Hydrology"],
  [2, "-", "dataset", "Landuse"],
  [3, "", "polygons", "Apartments_Belt"],
  [3, "", "polygons", "Central_Belt"],
  [3, "", "polygons", "Central_Domes"],
  [3, "", "polygons", "Dining___Cultural_Belt"],
  [3, "", "polygons", "Flats"],
  [3, "", "points", "Homes"],
  [3, "", "polygons", "R_D"],
  [3, "", "polygons", "R_D_Belt"],
  [3, "", "polygons", "Residential_Belt"],
  [3, "", "polygons", "Sporting"],
  [2, "+", "dataset", "OuterBoundary"],
  [2, "+", "dataset", "Transportation"],
  [1, "", "shapefile", "Agricultural Belt.shp"],
  [1, "", "shapefile", "Apartments Belt.shp"],
  [1, "", "shapefile", "Central Belt.shp"],
  [1, "", "shapefile", "Central Domes.shp"],
  [1, "", "shapefile", "Circular Waterway.shp"],
  [1, "", "shapefile", "Dining & Cultural Belt.shp"],
  [1, "", "shapefile", "Flats.shp"],
];

const INDENT = ["pl-[42px]", "pl-[60px]", "pl-[78px]", "pl-24"];

function Catalog() {
  const [tab, setTab] = useState("Catalog");
  const tabClass = (name) =>
    clsx(
      "flex h-[18px] items-center gap-0.5 rounded-b border border-t-0 border-[#a0a0a0] px-1",
      tab === name ? "bg-white" : "bg-[#f0f0f0] text-[#666]",
    );

  return (
    <aside className="relative ml-1.5 flex w-[279px] shrink-0 flex-col">
      <PanelHeader title="Catalog" />
      <div className="flex h-6 shrink-0 items-center gap-px bg-[#fafafa] pl-0.5">
        <Tools sep="w-[7px]" list="catBack v catFwd catUp home defaultGdb | contents v | connect | tree | options" />
      </div>
      <div className="flex h-[22px] shrink-0 items-center">
        <label htmlFor="location" className="w-[50px] pl-0.5 text-[10px]">
          Location:
        </label>
        <div className="relative flex min-w-0 flex-1 items-center">
          <Icon name="points" className="pointer-events-none absolute left-1 size-[15px]" />
          <select id="location" className="h-5 w-full appearance-none border border-[#8a8a8a] bg-white pl-[22px] text-[11px]">
            <option>Wind_Power</option>
          </select>
          <Chevron className="pointer-events-none absolute right-1 size-2" />
        </div>
      </div>
      <div className="mt-px flex min-h-0 flex-1 flex-col border border-r-0 border-[#828790] bg-white">
        <div className="flex min-h-0 flex-1">
          <ul className="min-w-0 flex-1 overflow-hidden">
            {CATALOG.map(([level, toggle, icon, name], i) => (
              <li key={i} className={clsx("flex h-4 items-center whitespace-nowrap", INDENT[level])}>
                {toggle && <Toggle open={toggle === "-"} />}
                <Icon name={icon} className={clsx("size-[15px]", toggle ? "ml-1.5" : "ml-3.5")} />
                <span className={clsx("ml-0.5 px-0.5 leading-4", name === "Wind_Power" && "bg-[#ededed]")}>{name}</span>
              </li>
            ))}
          </ul>
          <VScroll
            className="mr-1"
            thumb={
              <>
                <span className="flex-[3]" />
                <span className="flex-[2] bg-[#c9c9c9]" />
                <span className="flex-[2]" />
              </>
            }
          />
        </div>
        <div className="flex h-4 shrink-0 items-center bg-[#f0f0f0]">
          <button aria-label="Scroll left" className="flex w-4 justify-center">
            <Chevron dir="left" />
          </button>
          <span className="mr-2.5 h-[13px] flex-1 bg-[#a0a0a0]" />
          <button aria-label="Scroll right" className="mr-[18px] flex w-4 justify-center">
            <Chevron dir="right" />
          </button>
        </div>
      </div>
      <div role="tablist" className="flex h-[22px] shrink-0 items-center bg-[#f7f7f7]">
        <button role="tab" aria-selected={tab === "ArcToolbox"} onClick={() => setTab("ArcToolbox")} className={tabClass("ArcToolbox")}>
          <Icon name="winToolbox" className="size-[15px]" /> ArcToolbox
        </button>
        <button role="tab" aria-selected={tab === "Catalog"} onClick={() => setTab("Catalog")} className={tabClass("Catalog")}>
          <Icon name="winCatalog" className="size-[15px]" /> Catalog
        </button>
      </div>
      <div className="pointer-events-none absolute bottom-[11px] left-1.5 whitespace-nowrap text-[#8c8c8c]/60">
        <p className="text-[18px] leading-6">Activate Windows</p>
        <p className="text-[13px] leading-[18px]">Go to Settings to activate Windows.</p>
      </div>
    </aside>
  );
}

/* ---------- context menu ---------- */

const MENU = [
  ["Copy", "copy"],
  ["Remove", "remove"],
  null,
  ["Open Attribute Table", "table", "active"],
  ["Joins and Relates", "", "sub"],
  null,
  ["Zoom To Layer", "zoomLayer"],
  ["Zoom To Make Visible", "zoomVisible", "off"],
  ["Visible Scale Range", "", "sub"],
  null,
  ["Use Symbol Levels"],
  null,
  ["Selection", "", "sub"],
  null,
  ["Label Features"],
  null,
  ["Edit Features", "", "sub"],
  null,
  ["Convert Labels to Annotation...", "annoOff", "off"],
  ["Convert Features to Graphics...", "toGraphics"],
  ["Convert Symbology to Representation..."],
  null,
  ["Data", "", "sub"],
  null,
  ["Save As Layer File...", "layerFile"],
  ["Create Layer Package...", "layerPackage"],
  null,
  ["Properties...", "properties"],
];

function ContextMenu() {
  return (
    <div
      role="menu"
      className="absolute top-[179px] left-[111px] w-[261px] border border-[#8f8f8f] bg-linear-to-r from-[#f1f1f3] from-[25px] to-[#fcfcfc] to-[26px] py-px shadow-[2px_2px_3px_rgba(0,0,0,0.35)]"
    >
      {MENU.map((item, i) => {
        if (!item) return <div key={i} role="separator" className="my-px ml-[31px] h-0.5 border-b border-[#b5b5b5]" />;
        const [label, icon, state] = item;
        return (
          <button
            key={label}
            role="menuitem"
            disabled={state === "off"}
            className={clsx(
              "flex h-5 w-full items-center border pl-1 text-left",
              state === "active" ? "border-[#3f8ed0] bg-[#b3d7f3]" : "border-transparent",
              state === "off" && "text-[#adadad]",
            )}
          >
            <span className="flex w-[27px] shrink-0">{icon && <Icon name={icon} className="size-[15px]" />}</span>
            <span className="flex-1 whitespace-nowrap">{label}</span>
            {state === "sub" && (
              <svg viewBox="0 0 4 8" className="mr-1.5 h-[7px] w-1">
                <path d="M0 0 4 4 0 8Z" fill="#111" />
              </svg>
            )}
          </button>
        );
      })}
      <svg viewBox="0 0 12 19" className="pointer-events-none absolute top-[63px] left-[61px] h-[19px] w-3">
        <path d="M1 1V15.5L4.3 12.5 6.5 17.5 8.7 16.5 6.5 11.8H11Z" fill="#fff" fillOpacity=".85" stroke="#444" />
      </svg>
    </div>
  );
}

/* ---------- window chrome ---------- */

const MENUS = ["File", "Edit", "View", "Bookmarks", "Insert", "Selection", "Geoprocessing", "Customize", "Windows", "Help"];

function TitleBar() {
  return (
    <header className="flex h-[22px] shrink-0 items-center bg-white pl-0.5">
      <ArcLogo className="size-4" />
      <h1 className="flex-1 pl-1">Untitled - ArcMap</h1>
      <button aria-label="Minimize" className="flex w-[42px] justify-center">
        <svg viewBox="0 0 10 10" className="size-2.5"><path d="M0 5.5H10" stroke="#333" /></svg>
      </button>
      <button aria-label="Restore" className="flex w-[42px] justify-center">
        <svg viewBox="0 0 10 10" className="size-2.5">
          <path d="M.5 2.5H7.5V9.5H.5ZM2.5 2.5V.5H9.5V7.5H7.5" fill="none" stroke="#333" />
        </svg>
      </button>
      <button aria-label="Close" className="flex w-11 justify-center">
        <svg viewBox="0 0 10 10" className="size-2.5"><path d="M.5 .5 9.5 9.5M9.5 .5 .5 9.5" stroke="#333" /></svg>
      </button>
    </header>
  );
}

function Taskbar() {
  return (
    <footer className="flex h-[37px] shrink-0 items-stretch bg-black text-white">
      <button aria-label="Start" className="flex w-[45px] items-center justify-center">
        <svg viewBox="0 0 16 16" className="size-4">
          <path d="M0 2.3 6.8 1.3V7.6H0ZM7.7 1.2 16 0V7.6H7.7ZM0 8.4H6.8V14.7L0 13.7ZM7.7 8.4H16V16L7.7 14.8Z" fill="#fff" />
        </svg>
      </button>
      <button aria-label="Search" className="flex w-[45px] items-center justify-center">
        <svg viewBox="0 0 16 16" className="size-4">
          <circle cx="10" cy="5.8" r="4.8" fill="none" stroke="#fff" strokeWidth="1.4" />
          <path d="M6.5 9.3.8 15" stroke="#fff" strokeWidth="1.5" />
        </svg>
      </button>
      <button aria-label="Task view" className="flex w-12 items-center justify-center pr-1">
        <svg viewBox="0 0 20 16" className="h-4 w-5">
          <path d="M4.500 1.500H15.500V14.500H4.500ZM3 3.500H1V12.500H3M17 3.500H19V12.500H17" fill="none" stroke="#fff" strokeWidth="1.2" />
        </svg>
      </button>
      <button aria-label="ArcMap" className="flex w-[45px] items-center justify-center border-b-2 border-[#76b9ed] bg-[#363636]">
        <ArcLogo className="size-[22px]" />
      </button>
      <button aria-label="Camtasia" className="ml-[5px] flex w-[37px] items-center justify-center border-b-2 border-[#76b9ed]">
        <svg viewBox="0 0 24 24" className="size-[23px]">
          <rect width="24" height="24" rx="2" fill="#f0493c" />
          <path d="M18.5 6H9.500Q6.500 6 6.500 9V15Q6.500 18 9.500 18H18.5" fill="none" stroke="#fff" strokeWidth="3.600" />
        </svg>
      </button>
      <div className="ml-auto flex items-center">
        <button aria-label="Show hidden icons" className="flex w-[22px] justify-center">
          <svg viewBox="0 0 12 12" className="size-3"><path d="M1 8.5 6 3.5 11 8.5" fill="none" stroke="#fff" strokeWidth="1.3" /></svg>
        </button>
        <button aria-label="Battery" className="flex w-6 justify-center">
          <svg viewBox="0 0 16 12" className="h-3 w-4">
            <path d="M3 4.5H14V10.5H3ZM15 6V9M1 1V4M4 1V4M0 3.5H5V5.5L3.5 7" fill="none" stroke="#fff" strokeWidth="1.4" />
            <path d="M6 6H13V9H6Z" fill="#fff" />
          </svg>
        </button>
        <button aria-label="Volume" className="flex w-[22px] justify-center">
          <svg viewBox="0 0 16 12" className="h-3 w-4">
            <path d="M1 4H3.5L7 1V11L3.5 8H1ZM9 4Q10 6 9 8M11 2.5Q13 6 11 9.5M13 1Q16 6 13 11" fill="none" stroke="#fff" strokeWidth="1.1" />
          </svg>
        </button>
        <button aria-label="Airplane mode" className="flex w-6 justify-center">
          <svg viewBox="0 0 16 14" className="h-3.5 w-4">
            <path d="M1 4H3L4.5 6H7L5 1H7L10 6H13.5Q15.5 7 13.5 8H10L7 13H5L7 8H4.5L3 10H1L2 7Z" fill="none" stroke="#fff" strokeWidth="1.2" />
          </svg>
        </button>
        <button className="w-8 text-center text-[11px]">ENG</button>
        <div className="w-16 text-center text-[11px] leading-[17px]">
          <div>5:58 AM</div>
          <div>1/15/2017</div>
        </div>
        <button aria-label="Notifications" className="relative flex w-[46px] pl-[9px]">
          <svg viewBox="0 0 16 16" className="size-4">
            <path d="M0 1H16V12H9L6 15V12H0Z" fill="#fff" />
            <path d="M3 4.5H13M3 7H13M3 9.5H10" stroke="#111" />
          </svg>
          <span className="absolute top-1.5 left-[17px] size-3.5 rounded-full border border-[#888] bg-[#222] text-center text-[10px] leading-3 font-bold">
            1
          </span>
        </button>
      </div>
    </footer>
  );
}

export default function App() {
  return (
    <div className="relative flex h-screen flex-col overflow-hidden bg-[#f0f0f0] font-['Open_Sans','Noto_Sans',sans-serif] text-[11px] leading-4 text-[#222]">
      <TitleBar />
      <nav className="flex h-[23px] shrink-0 items-center gap-3.5 pl-[11px]">
        {MENUS.map((m) => (
          <button key={m}>{m}</button>
        ))}
      </nav>
      <div className="flex shrink-0 flex-col bg-[#f7f7f7] pb-0.5">
        <StandardToolbar />
        <ToolsToolbar />
      </div>
      <div className="flex min-h-0 flex-1">
        <TableOfContents />
        <MapView />
        <Catalog />
      </div>
      <div className="flex h-[21px] shrink-0 items-center justify-end pr-[81px] text-[10px]">
        <span>334543.215&nbsp; 3704265.189 Meters</span>
      </div>
      <Taskbar />
      <ContextMenu />
    </div>
  );
}
